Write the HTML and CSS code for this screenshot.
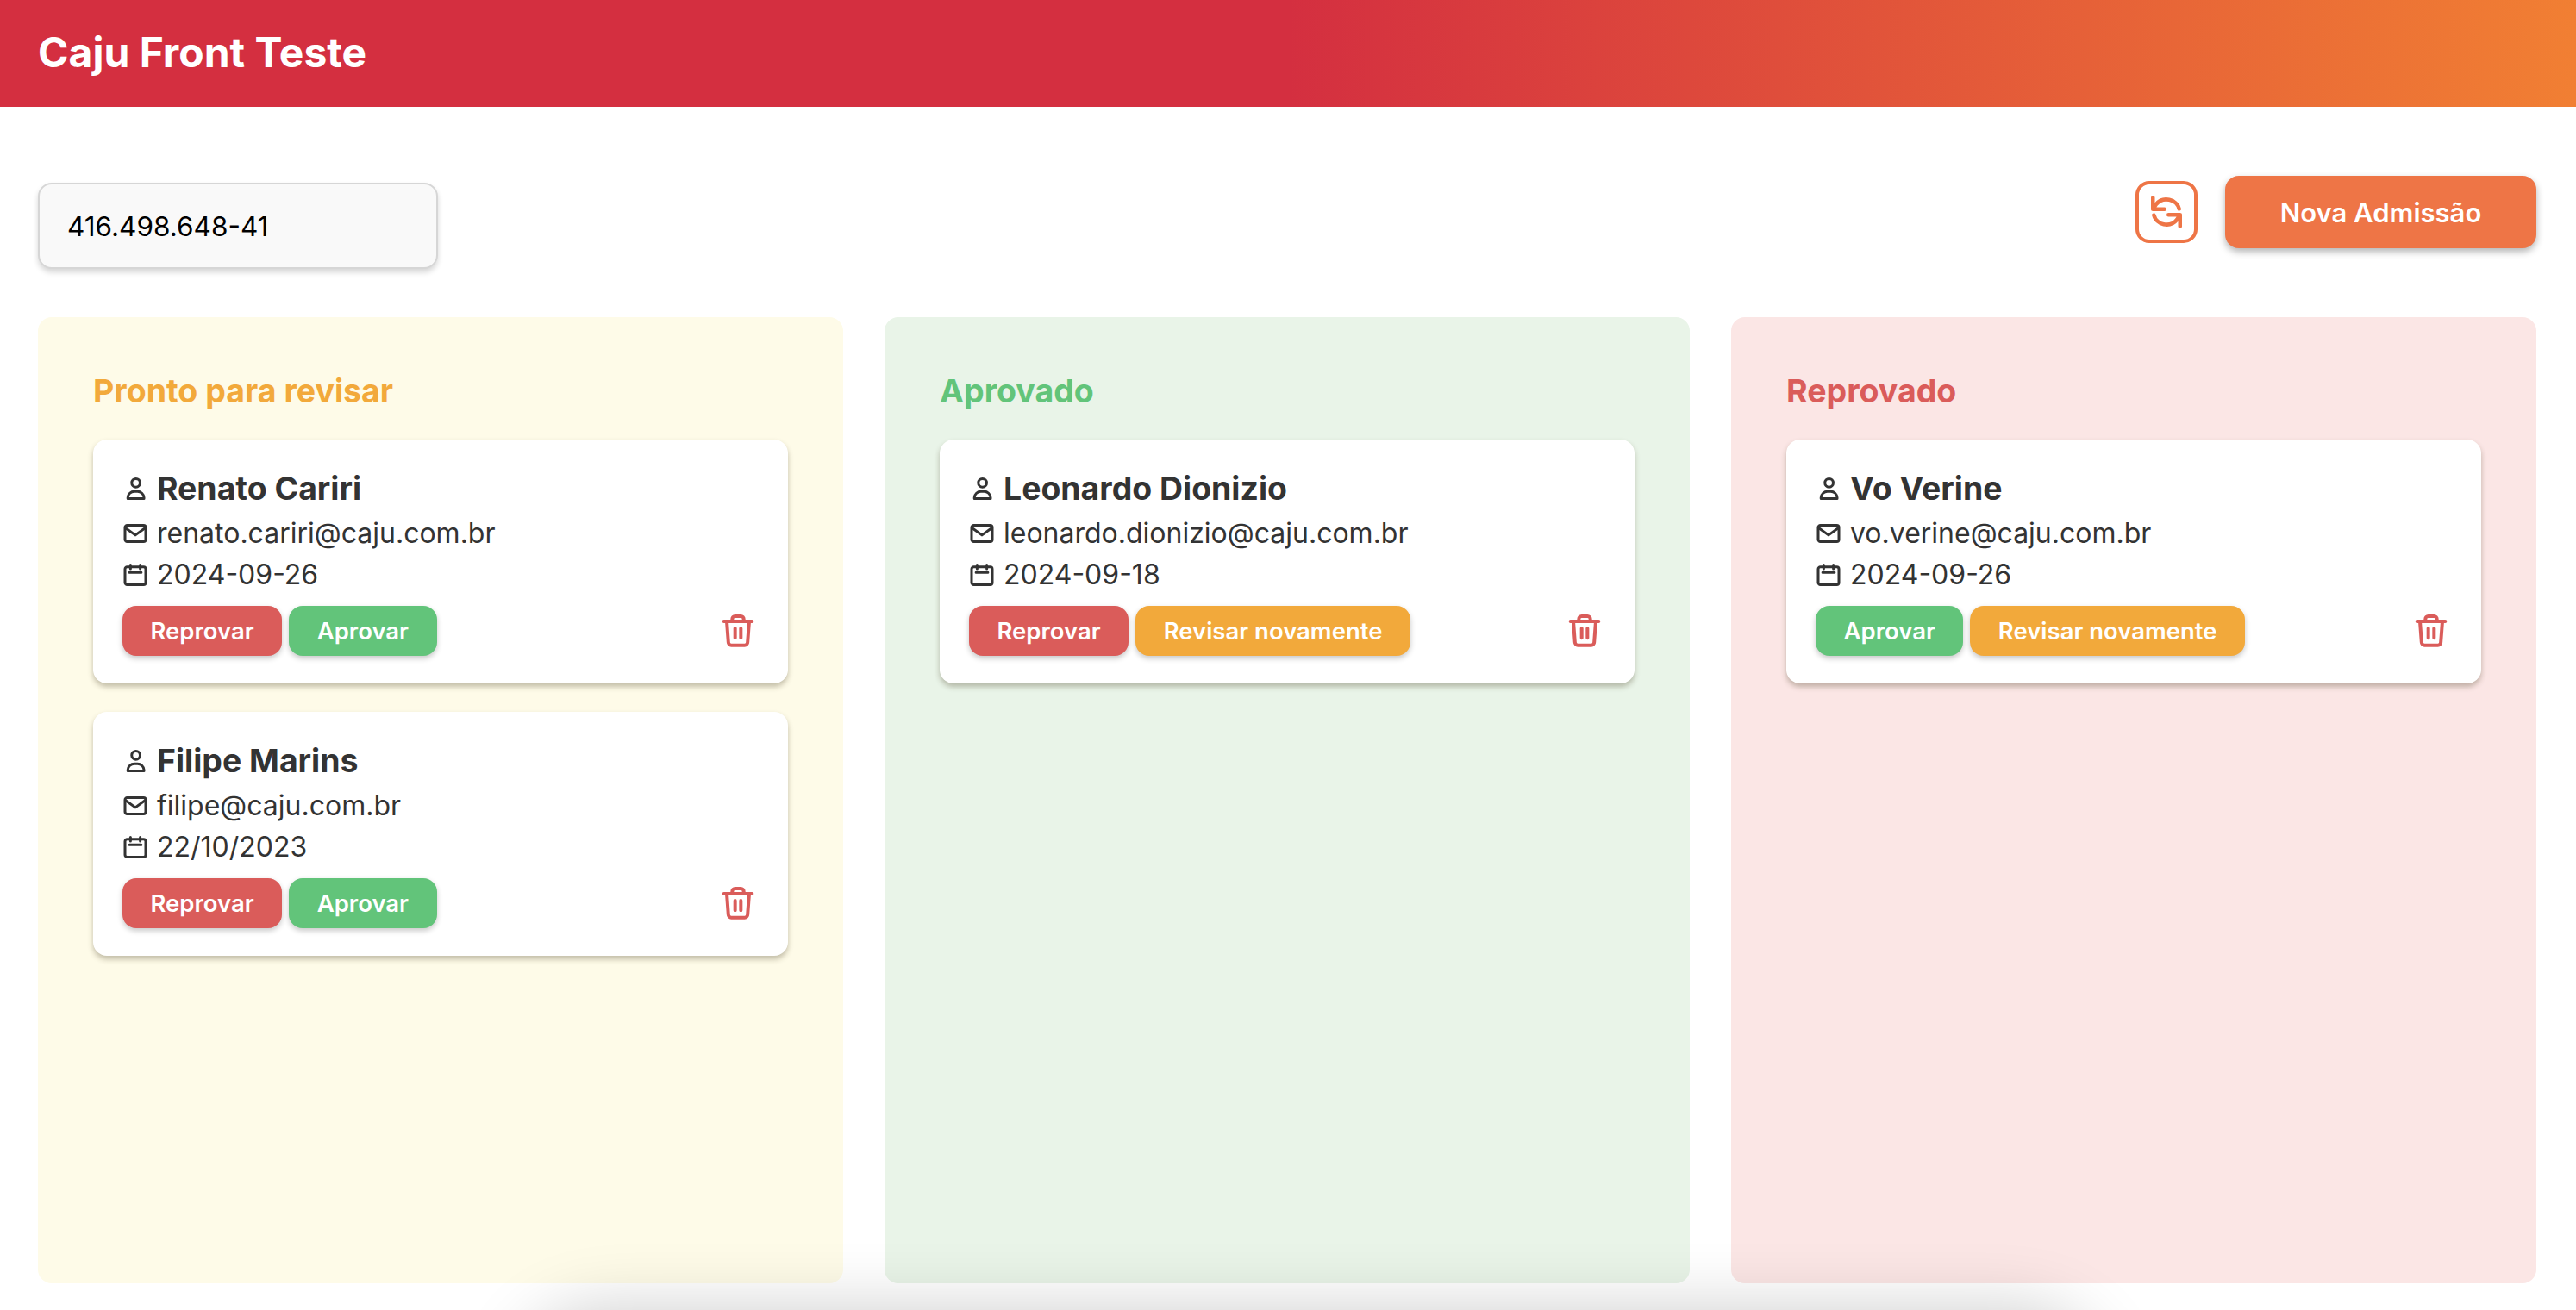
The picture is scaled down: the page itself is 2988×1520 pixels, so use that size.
FILE: index.html
```html
<!DOCTYPE html>
<html lang="pt-BR">
<head>
<meta charset="utf-8">
<title>Caju Front Teste</title>
<link rel="stylesheet" href="styles.css">
</head>
<body>
<svg class="defs" width="0" height="0" aria-hidden="true">
  <symbol id="i-user" viewBox="0 0 24 24"><circle cx="12.500" cy="6.600" r="3.900"/><path d="M5 21.200v-1a6 6 0 0 1 6-5.600h3a6 6 0 0 1 6 5.600v1z"/></symbol>
  <symbol id="i-mail" viewBox="0 0 24 24"><rect x="2.400" y="4.400" width="19.200" height="15.200" rx="2"/><path d="M3 7l9 6.500L21 7"/></symbol>
  <symbol id="i-cal" viewBox="0 0 24 24"><rect x="2.400" y="4.600" width="19.200" height="16.600" rx="2"/><path d="M7.500 2.800v3.600M16.500 2.800v3.600M6.500 9.700h11"/></symbol>
  <symbol id="i-trash" viewBox="0 0 24 24"><path d="M2.200 5.400h19.600M8 5.400V3.800a2 2 0 0 1 2-2h4a2 2 0 0 1 2 2v1.600M4.200 5.400 5.300 20a2 2 0 0 0 2 2h9.400a2 2 0 0 0 2-2l1.100-14.600M10 10.200v6.800M14 10.200v6.800"/></symbol>
</svg>
<header class="topbar"><h1 class="brand">Caju Front Teste</h1></header>
<main class="page">
  <section class="toolbar">
    <input class="search" type="text" value="416.498.648-41">
    <div class="actions">
      <button class="refresh" type="button" aria-label="Atualizar">
        <svg viewBox="0 0 24 24"><path d="M1.500 .8v9h9M21.800 9.600A10 9.200 0 0 0 4 6L1.500 9.800M22.500 23.200v-9h-9M2.200 14.400A10 9.200 0 0 0 20 18l2.500-3.800"/></svg>
      </button>
      <button class="primary" type="button">Nova Admissão</button>
    </div>
  </section>
  <section class="board">
    <div class="column col-review">
      <h2 class="col-title">Pronto para revisar</h2>
      <div class="cards">
        <article class="card">
          <div class="row name"><svg class="ic"><use href="#i-user"/></svg><h3>Renato Cariri</h3></div>
          <div class="row"><svg class="ic"><use href="#i-mail"/></svg><span>renato.cariri@caju.com.br</span></div>
          <div class="row"><svg class="ic"><use href="#i-cal"/></svg><span>2024-09-26</span></div>
          <div class="card-actions"><button class="btn red" type="button">Reprovar</button><button class="btn green" type="button">Aprovar</button><svg class="trash"><use href="#i-trash"/></svg></div>
        </article>
        <article class="card">
          <div class="row name"><svg class="ic"><use href="#i-user"/></svg><h3>Filipe Marins</h3></div>
          <div class="row"><svg class="ic"><use href="#i-mail"/></svg><span>filipe@caju.com.br</span></div>
          <div class="row"><svg class="ic"><use href="#i-cal"/></svg><span>22/10/2023</span></div>
          <div class="card-actions"><button class="btn red" type="button">Reprovar</button><button class="btn green" type="button">Aprovar</button><svg class="trash"><use href="#i-trash"/></svg></div>
        </article>
      </div>
    </div>
    <div class="column col-approved">
      <h2 class="col-title">Aprovado</h2>
      <div class="cards">
        <article class="card">
          <div class="row name"><svg class="ic"><use href="#i-user"/></svg><h3>Leonardo Dionizio</h3></div>
          <div class="row"><svg class="ic"><use href="#i-mail"/></svg><span>leonardo.dionizio@caju.com.br</span></div>
          <div class="row"><svg class="ic"><use href="#i-cal"/></svg><span>2024-09-18</span></div>
          <div class="card-actions"><button class="btn red" type="button">Reprovar</button><button class="btn amber" type="button">Revisar novamente</button><svg class="trash"><use href="#i-trash"/></svg></div>
        </article>
      </div>
    </div>
    <div class="column col-rejected">
      <h2 class="col-title">Reprovado</h2>
      <div class="cards">
        <article class="card">
          <div class="row name"><svg class="ic"><use href="#i-user"/></svg><h3>Vo Verine</h3></div>
          <div class="row"><svg class="ic"><use href="#i-mail"/></svg><span>vo.verine@caju.com.br</span></div>
          <div class="row"><svg class="ic"><use href="#i-cal"/></svg><span>2024-09-26</span></div>
          <div class="card-actions"><button class="btn green" type="button">Aprovar</button><button class="btn amber" type="button">Revisar novamente</button><svg class="trash"><use href="#i-trash"/></svg></div>
        </article>
      </div>
    </div>
  </section>
</main>
<div class="bottom-shadow" aria-hidden="true"></div>
</body>
</html>
```
FILE: styles.css
```css
* { box-sizing: border-box; }
html, body { margin: 0; height: 100%; overflow: hidden; background: #fff; }
body { font-family: Inter, "Liberation Sans", sans-serif; color: #333; position: relative; }
.defs { position: absolute; }
.topbar {
  height: 124px; display: flex; align-items: center; padding: 0 44px 2px;
  background: linear-gradient(90deg, #d42f40 0%, #d42f40 50%, #f17f33 100%);
}
.brand { margin: 0; font-size: 48px; line-height: 1; font-weight: 700; color: #fff; }
.page { padding: 80px 46px 0 44px; }
.toolbar { height: 120px; display: flex; justify-content: space-between; align-items: flex-start; }
.search {
  width: 464px; height: 100px; margin-top: 8px; padding: 0 32px;
  font: 400 31.500px Inter, sans-serif; color: #000; background: #f9f9f9;
  border: 2px solid #d6d6d6; border-radius: 16px; box-shadow: 0 4px 6px rgba(0,0,0,.16); outline: 0;
}
.actions { display: flex; align-items: center; gap: 32px; height: 84px; }
.refresh {
  width: 72px; height: 72px; padding: 0; display: flex; align-items: center; justify-content: center;
  background: #fff; border: 4px solid #ee7546; border-radius: 16px;
}
.refresh svg { width: 36px; height: 36px; overflow: visible; fill: none; stroke: #ee7546; stroke-width: 3; stroke-linecap: round; stroke-linejoin: round; }
.primary {
  width: 361px; height: 84px; border: 0; border-radius: 16px; background: #ee7546; color: #fff;
  font: 600 31px Inter, sans-serif; box-shadow: 0 4px 8px rgba(0,0,0,.3);
}
.board { margin-top: 44px; display: grid; grid-template-columns: repeat(3, 1fr); gap: 48px; height: 1121px; }
.column { border-radius: 16px; padding: 64px; }
.col-review { background: #fefbe8; --tone: #f2a93b; }
.col-approved { background: #e9f4e8; --tone: #62c47a; }
.col-rejected { background: #fbe6e5; --tone: #da5c5a; }
.col-title { margin: 0; font-size: 37.500px; line-height: 44px; font-weight: 700; color: var(--tone); }
.cards { margin-top: 34px; display: flex; flex-direction: column; gap: 33px; }
.card {
  height: 283px; padding: 29px 34px 32px; background: #fff; border-radius: 16px;
  box-shadow: 0 4px 6px rgba(60,50,20,.3);
}
.row { display: flex; align-items: center; gap: 10px; height: 48px; font-size: 32px; line-height: 48px; color: #333; }
.row.name { height: 56px; }
.row h3 { margin: 0; font-size: 37.400px; font-weight: 700; color: #333; }
.ic { width: 30px; height: 30px; fill: none; stroke: #333; stroke-width: 2.400; stroke-linecap: round; stroke-linejoin: round; flex: none; }
.card-actions { display: flex; align-items: center; gap: 8px; margin-top: 12px; }
.btn {
  height: 58px; padding: 0 32.500px; border: 0; border-radius: 16px; color: #fff;
  font: 600 27.500px Inter, sans-serif; box-shadow: 0 3px 6px rgba(0,0,0,.22);
}
.red { background: #da5c5a; }
.green { background: #62c47a; }
.amber { background: #f2a93b; }
.trash { width: 40px; height: 40px; margin-left: auto; margin-right: 4px; fill: none; stroke: #da5c5a; stroke-width: 2.400; stroke-linecap: round; stroke-linejoin: round; flex: none; }
.bottom-shadow { position: absolute; left: 0; right: 0; bottom: 0; height: 120px; overflow: hidden; pointer-events: none; }
.bottom-shadow::before {
  content: ""; position: absolute; left: 640px; width: 1760px; top: 160px; height: 120px; border-radius: 60px;
  box-shadow: 0 0 80px 40px rgba(0,0,0,.2);
}
```
